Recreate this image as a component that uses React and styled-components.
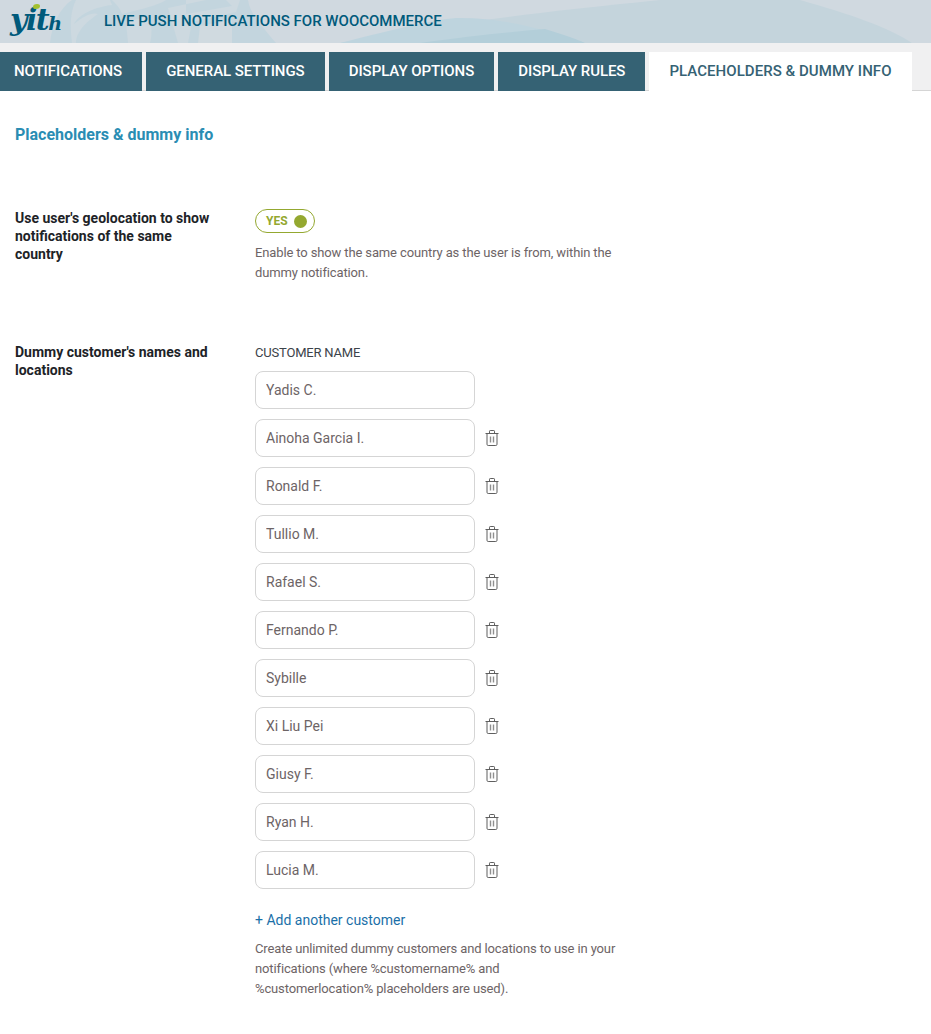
import styled, { createGlobalStyle } from "styled-components";

const customers = [
  "Yadis C.",
  "Ainoha Garcia I.",
  "Ronald F.",
  "Tullio M.",
  "Rafael S.",
  "Fernando P.",
  "Sybille",
  "Xi Liu Pei",
  "Giusy F.",
  "Ryan H.",
  "Lucia M.",
];

const tabs = [
  "Notifications",
  "General settings",
  "Display options",
  "Display rules",
  "Placeholders & dummy info",
];

function TrashIcon() {
  return (
    <svg width="14" height="16" viewBox="0 0 14 16" fill="none" stroke="#5f5f5f" strokeWidth="1">
      <path d="M0.5 3.5h13" />
      <path d="M4.5 3.5V1.2a.7.7 0 0 1 .7-.7h3.6a.7.7 0 0 1 .7.7v2.3" />
      <path d="M2 3.5v10.8a1.2 1.2 0 0 0 1.2 1.2h7.6a1.2 1.2 0 0 0 1.2-1.2V3.5" />
      <path d="M5.5 6.5v6M8.5 6.5v6" stroke="#8f8f8f" strokeWidth="1.4" />
    </svg>
  );
}

function HeaderWaves() {
  return (
    <WavesSvg viewBox="0 0 931 43" preserveAspectRatio="none">
      <path d="M50 43 C52 24 60 8 72 0 H248 C250 14 262 26 276 43 Z" fill="#c3d5de" />
      <path d="M76 0 H110 L112 5 C90 8 78 16 74 24 C84 16 92 12 98 14 C80 26 76 36 76 43 H72 C70 26 70 12 76 0 Z" fill="#cdd9e0" />
      <path d="M112 0 H166 C160 4 148 8 122 14 C120 8 116 4 112 0 Z" fill="#cdd9e0" />
      <path d="M126 22 L150 16 C152 26 152 36 150 43 H128 Z" fill="#cdd9e0" />
      <path d="M168 8 L206 0 H186 L186 14 L232 6 L226 0 H240 L236 12 L192 22 L188 43 H178 Z" fill="#cdd9e0" />
      <path d="M200 26 L232 20 V43 H198 Z" fill="#d0dae0" />
      <path d="M340 43 C430 26 520 14 660 0 H800 C850 14 890 28 912 43 Z" fill="#c4d4dc" />
      <path d="M340 43 C400 28 440 18 460 18 C510 18 550 32 585 43 Z" fill="#bed4de" />
      <path d="M420 43 C470 36 510 32 545 29 C560 34 575 38 585 43 Z" fill="#b3ced9" />
    </WavesSvg>
  );
}

export default function App() {
  return (
    <>
      <GlobalStyle />
      <Header>
        <HeaderWaves />
        <Logo>
          yit<LogoTail>h</LogoTail>
          <LogoLeaf />
        </Logo>
        <PluginTitle>Live Push Notifications for WooCommerce</PluginTitle>
      </Header>
      <TabBar>
        {tabs.map((tab, index) => (
          <Tab key={tab} $active={index === tabs.length - 1}>
            {tab}
          </Tab>
        ))}
      </TabBar>
      <Main>
        <PageTitle>Placeholders &amp; dummy info</PageTitle>
        <OptionRow>
          <OptionLabel>Use user's geolocation to show notifications of the same country</OptionLabel>
          <OptionBody>
            <Toggle>
              YES
              <ToggleKnob />
            </Toggle>
            <Description>
              Enable to show the same country as the user is from, within the dummy notification.
            </Description>
          </OptionBody>
        </OptionRow>
        <CustomersRow>
          <OptionLabel>Dummy customer's names and locations</OptionLabel>
          <OptionBody>
            <ColumnTitle>Customer name</ColumnTitle>
            <CustomerList>
              {customers.map((name, index) => (
                <CustomerRow key={name}>
                  <NameInput defaultValue={name} />
                  {index > 0 && (
                    <DeleteButton type="button" aria-label="Delete">
                      <TrashIcon />
                    </DeleteButton>
                  )}
                </CustomerRow>
              ))}
            </CustomerList>
            <AddLink href="#">+ Add another customer</AddLink>
            <Description>
              Create unlimited dummy customers and locations to use in your notifications (where
              %customername% and %customerlocation% placeholders are used).
            </Description>
          </OptionBody>
        </CustomersRow>
      </Main>
    </>
  );
}

const GlobalStyle = createGlobalStyle`
  html, body {
    margin: 0;
    background: #fff;
    font-family: Roboto, "Liberation Sans", sans-serif;
  }
`;

const Header = styled.header`
  position: relative;
  display: flex;
  align-items: center;
  height: 43px;
  padding-left: 10px;
  background: #d0d9e0;
  overflow: hidden;
`;

const WavesSvg = styled.svg`
  position: absolute;
  inset: 0;
  width: 100%;
  height: 100%;
`;

const Logo = styled.div`
  position: relative;
  width: 94px;
  font-family: "DejaVu Serif", serif;
  font-size: 30px;
  font-style: italic;
  font-weight: 700;
  line-height: 40px;
  letter-spacing: -1.5px;
  color: #005a7b;
`;

const LogoTail = styled.span`
  font-size: 19px;
  letter-spacing: 0;
`;

const LogoLeaf = styled.span`
  position: absolute;
  top: 4px;
  left: 23px;
  width: 7px;
  height: 5px;
  border-radius: 60% 40% 60% 40%;
  background: #a3c02f;
`;

const PluginTitle = styled.h1`
  position: relative;
  margin: 0;
  padding-bottom: 2px;
  font-size: 15px;
  font-weight: 500;
  text-transform: uppercase;
  color: #005a7b;
`;

const TabBar = styled.nav`
  display: flex;
  gap: 4px;
  box-sizing: border-box;
  height: 48px;
  padding-top: 9px;
  background: #f0f0f1;
  border-bottom: 1px solid #d5d5d5;
`;

const Tab = styled.div`
  display: flex;
  align-items: center;
  box-sizing: border-box;
  height: 39px;
  padding: 0 20px 2px;
  font-size: 15px;
  font-weight: 500;
  letter-spacing: ${(props) => (props.$active ? "0.05px" : "-0.05px")};
  text-transform: uppercase;
  white-space: nowrap;
  color: ${(props) => (props.$active ? "#356274" : "#fff")};
  background: ${(props) => (props.$active ? "#fff" : "#356274")};

  &:first-child {
    margin-left: -6px;
  }
`;

const Main = styled.main`
  padding: 34px 15px 20px;
`;

const PageTitle = styled.h2`
  margin: 0 0 64px;
  font-size: 16px;
  line-height: 20px;
  font-weight: 700;
  color: #2a8db3;
`;

const OptionRow = styled.section`
  display: flex;
`;

const CustomersRow = styled(OptionRow)`
  margin-top: 60px;
`;

const OptionLabel = styled.div`
  width: 200px;
  margin-right: 40px;
  font-size: 14px;
  line-height: 18px;
  font-weight: 700;
  color: #1d2327;
`;

const OptionBody = styled.div`
  width: 365px;
`;

const Toggle = styled.div`
  display: flex;
  align-items: center;
  justify-content: space-between;
  box-sizing: border-box;
  width: 60px;
  height: 24px;
  padding: 0 7px 0 10px;
  border: 1px solid #94a830;
  border-radius: 12px;
  font-size: 12px;
  font-weight: 700;
  color: #94a830;
`;

const ToggleKnob = styled.span`
  width: 13px;
  height: 13px;
  border-radius: 50%;
  background: #94a830;
`;

const Description = styled.p`
  margin: 10px 0 0;
  font-size: 13px;
  line-height: 20px;
  letter-spacing: -0.13px;
  color: #6d6466;
`;

const ColumnTitle = styled.div`
  margin-top: 1px;
  font-size: 13px;
  line-height: 18px;
  letter-spacing: -0.2px;
  text-transform: uppercase;
  color: #3c434a;
`;

const CustomerList = styled.div`
  display: flex;
  flex-direction: column;
  gap: 10px;
  margin-top: 9px;
`;

const CustomerRow = styled.div`
  display: flex;
  align-items: center;
  gap: 10px;
`;

const NameInput = styled.input`
  box-sizing: border-box;
  width: 220px;
  height: 38px;
  padding: 0 10px;
  border: 1px solid #d5d5d5;
  border-radius: 8px;
  background: #fff;
  font-family: inherit;
  font-size: 14px;
  color: #6d6466;
`;

const DeleteButton = styled.button`
  display: flex;
  padding: 0;
  border: 0;
  background: none;
`;

const AddLink = styled.a`
  display: block;
  margin-top: 22px;
  font-size: 14px;
  line-height: 18px;
  text-decoration: none;
  color: #1a6fa8;
`;
